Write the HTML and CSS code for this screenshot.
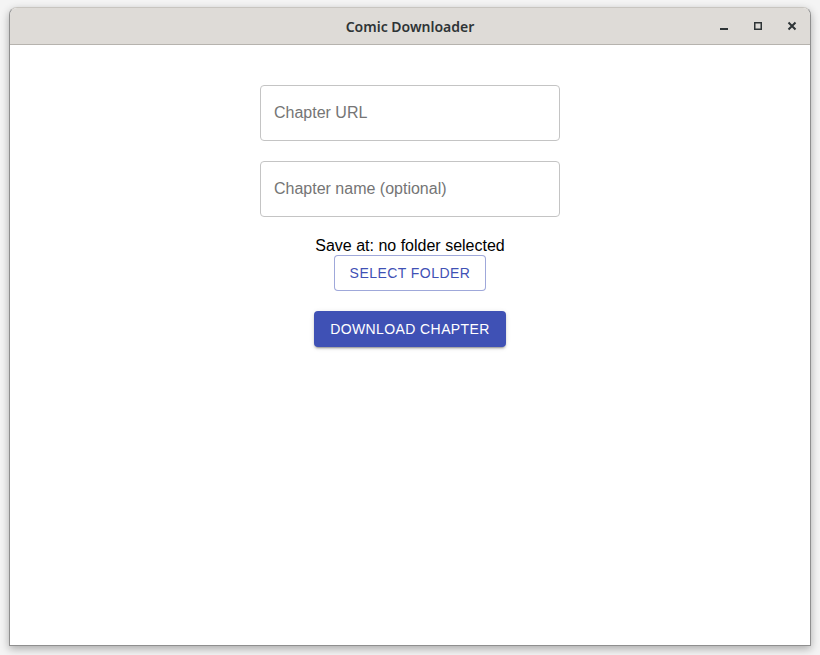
FILE: index.html
```html
<!DOCTYPE html>
<html>
<head>
<meta charset="utf-8">
<link rel="stylesheet" href="styles.css">
</head>
<body>
<div class="window">
  <div class="titlebar">
    <div class="title">Comic Downloader</div>
    <div class="controls">
      <svg class="ctl" width="12" height="12" viewBox="0 0 12 12"><rect x="2" y="8" width="8" height="2" fill="#2e3436"/></svg>
      <svg class="ctl" width="12" height="12" viewBox="0 0 12 12"><rect x="2.75" y="2.75" width="6.5" height="6.5" fill="none" stroke="#2e3436" stroke-width="1.5"/></svg>
      <svg class="ctl" width="12" height="12" viewBox="0 0 12 12"><path d="M2.5 2.5 L9.5 9.5 M9.5 2.5 L2.5 9.5" stroke="#2e3436" stroke-width="2"/></svg>
    </div>
  </div>
  <div class="content">
    <div class="field"><span class="placeholder">Chapter URL</span></div>
    <div class="field"><span class="placeholder">Chapter name (optional)</span></div>
    <div class="save">
      <div class="save-text">Save at: no folder selected</div>
      <button class="btn-outline">Select Folder</button>
    </div>
    <button class="btn-contained">Download Chapter</button>
  </div>
</div>
</body>
</html>
```
FILE: styles.css
```css
html, body {
  margin: 0;
  padding: 0;
  background: #f4f4f4;
  width: 820px;
  height: 655px;
  overflow: hidden;
}
body {
  padding: 7px 10px 10px 9px;
  box-sizing: border-box;
  font-family: "Liberation Sans", Arial, sans-serif;
}
.window {
  width: 802px;
  height: 639px;
  box-sizing: border-box;
  border: 1px solid #8f8f8f;
  border-top-color: #c8c5c0;
  border-radius: 8px 8px 0 0;
  background: #fff;
  box-shadow: 0 3px 9px rgba(0,0,0,0.3);
  display: flex;
  flex-direction: column;
  overflow: hidden;
}
.titlebar {
  height: 37px;
  flex: 0 0 37px;
  box-sizing: border-box;
  background: #dedbd7;
  border-bottom: 1px solid #b6b3ae;
  position: relative;
  display: flex;
  align-items: center;
  justify-content: center;
}
.title {
  font-family: "Noto Sans", "Open Sans", sans-serif;
  font-weight: 600;
  font-size: 14px;
  color: #2e3436;
}
.controls {
  position: absolute;
  right: 12px;
  top: 12px;
  display: flex;
  gap: 22px;
}
.ctl { display: block; }
.content {
  display: flex;
  flex-direction: column;
  align-items: center;
  padding-top: 40px;
}
.field {
  width: 300px;
  height: 56px;
  box-sizing: border-box;
  border: 1px solid #c4c4c4;
  border-radius: 4px;
  padding: 0 13px;
  display: flex;
  align-items: center;
  margin-bottom: 20px;
}
.placeholder {
  font-size: 16px;
  color: #757575;
}
.save {
  display: flex;
  flex-direction: column;
  align-items: center;
  margin-top: -1px;
}
.save-text {
  font-size: 16px;
  color: #000;
  line-height: 19px;
}
.btn-outline {
  font-family: "Liberation Sans", Arial, sans-serif;
  font-size: 14px;
  font-weight: 400;
  letter-spacing: 0.45px;
  text-transform: uppercase;
  color: #3f51b5;
  background: #fff;
  border: 1px solid rgba(63,81,181,0.5);
  border-radius: 4px;
  height: 36px;
  width: 152px;
  padding: 0;
  margin: 0;
}
.btn-contained {
  font-family: "Liberation Sans", Arial, sans-serif;
  font-size: 14px;
  font-weight: 400;
  letter-spacing: 0.4px;
  text-transform: uppercase;
  color: #fff;
  background: #3f51b5;
  border: none;
  border-radius: 4px;
  height: 36px;
  width: 192px;
  padding: 0;
  margin-top: 20px;
  box-shadow: 0 3px 1px -2px rgba(0,0,0,0.2), 0 2px 2px 0 rgba(0,0,0,0.14), 0 1px 5px 0 rgba(0,0,0,0.12);
}
```
